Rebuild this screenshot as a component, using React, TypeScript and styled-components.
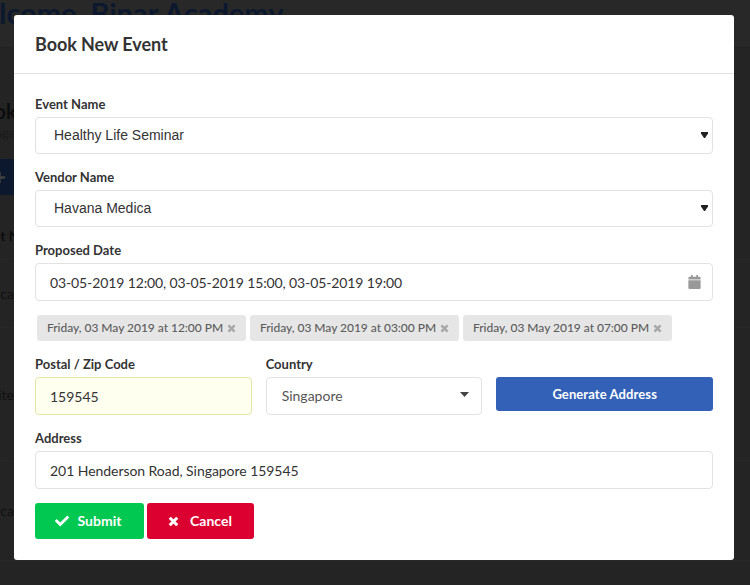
import React from "react";
import styled, { createGlobalStyle } from "styled-components";
import { FaCalendar, FaCheck, FaPlus } from "react-icons/fa";

const GlobalStyle = createGlobalStyle`
  html, body {
    margin: 0;
    height: 100%;
    overflow: hidden;
    background: #909090;
    font-family: "Lato", "Liberation Sans", sans-serif;
  }
  * { box-sizing: border-box; }
`;

/* page behind the modal, it is scrolled a bit so it gets cut off */
const Page = styled.div`
  width: 780px;
  height: 603px;
  margin: -18px 0 0 -30px;
  overflow: hidden;
  background: #909090;
  color: #333;
`;

const TopBar = styled.div`
  height: 66px;
  padding-top: 13px;
  background: #9e9e9e;
  border-bottom: 1px solid #888;
`;

const Welcome = styled.h1`
  margin: 0 0 0 -15px;
  font-size: 29px;
  line-height: 36px;
  font-weight: 700;
  white-space: nowrap;
  color: #3361b8;
`;

const PageHead = styled.h2`
  margin: 51px 0 0;
  font-size: 20px;
  line-height: 24px;
  font-weight: 700;
`;

const PageSub = styled.div`
  margin-top: 2px;
  font-size: 13px;
  line-height: 16px;
  color: #666;
`;

const AddButton = styled.div`
  display: flex;
  align-items: center;
  justify-content: flex-end;
  width: 44px;
  height: 36px;
  margin-top: 18px;
  padding-right: 8px;
  background: #3361b8;
  color: #fff;
  font-size: 13px;
`;

const TableHead = styled.div`
  height: 65px;
  padding-top: 32px;
  font-size: 14px;
  line-height: 18px;
  font-weight: 700;
  border-bottom: 1px solid #9c9c9c;
`;

const Row = styled.div<{ $h: number }>`
  display: flex;
  align-items: center;
  justify-content: space-between;
  height: ${(p) => p.$h}px;
  padding-right: 42px;
  font-size: 14px;
  border-bottom: 1px solid #9c9c9c;
`;

const RowLabel = styled.span`
  display: flex;
  justify-content: flex-end;
  width: 44px;
  white-space: nowrap;
  color: #444;
`;

const RowButton = styled.div`
  width: 60px;
  height: 39px;
  border: 1px solid #00c851;
  border-radius: 3px;
`;

const Overlay = styled.div`
  position: fixed;
  inset: 0;
  padding: 15px 0 0 14px;
  background: rgba(0, 0, 0, 0.75);
`;

const Modal = styled.div`
  width: 720px;
  background: #fff;
  border-radius: 3px;
  color: #333;
`;

const ModalHeader = styled.div`
  display: flex;
  align-items: center;
  height: 59px;
  padding: 0 21px;
  border-bottom: 1px solid #e2e2e2;
`;

const ModalTitle = styled.h3`
  margin: 0;
  font-size: 18px;
  font-weight: 700;
  letter-spacing: -0.07px;
`;

const Form = styled.form`
  display: flex;
  flex-direction: column;
  padding: 23px 21px 21px;
`;

const Field = styled.div`
  display: flex;
  flex-direction: column;
  margin-bottom: 16px;
`;

const Label = styled.label`
  margin-bottom: 6px;
  font-size: 13px;
  line-height: 14px;
  font-weight: 700;
  color: #333;
`;

const SelectWrap = styled.div`
  position: relative;
  display: flex;
`;

const NativeSelect = styled.select<{ $h?: number }>`
  appearance: none;
  width: 100%;
  height: ${(p) => p.$h ?? 37}px;
  padding: 0 18px 1px;
  background: #fff;
  border: 1px solid #e2e2e2;
  border-radius: 4px;
  font-family: "Liberation Sans", Arial, sans-serif;
  font-size: 14px;
  color: #333;
`;

const CountrySelect = styled(NativeSelect)`
  padding: 0 15px 1px;
  font-family: "Lato", sans-serif;
  color: #555;
`;

const Arrow = styled.svg<{ $right: number }>`
  position: absolute;
  top: 50%;
  right: ${(p) => p.$right}px;
  margin-top: -4px;
  pointer-events: none;
`;

const Input = styled.input<{ $highlight?: boolean; $spacing?: number }>`
  width: 100%;
  height: 38px;
  padding: 0 14px;
  background: ${(p) => (p.$highlight ? "#fffff0" : "#fff")};
  border: 1px solid ${(p) => (p.$highlight ? "#e3e8a6" : "#e2e2e2")};
  border-radius: 4px;
  font-family: "Lato", sans-serif;
  font-size: 14px;
  letter-spacing: ${(p) => p.$spacing ?? 0}px;
  color: #333;
`;

const CalendarIcon = styled(FaCalendar)`
  position: absolute;
  top: 12px;
  right: 12px;
  width: 13px;
  height: 14px;
  color: #999;
`;

const Chips = styled.div`
  display: flex;
  gap: 4px;
  margin: -2px 0 16px 2px;
`;

const Chip = styled.span`
  display: flex;
  align-items: center;
  justify-content: space-between;
  width: 209px;
  height: 26px;
  padding: 0 10px 1px;
  background: #e6e6e6;
  border-radius: 3px;
  font-size: 12px;
  font-weight: 500;
  letter-spacing: -0.03px;
  color: #5c5c5c;
`;

const ChipCross = styled.svg`
  width: 9px;
  height: 9px;
  margin-top: 1px;
  color: #a8a8a8;
`;

const ThreeCols = styled.div`
  display: grid;
  grid-template-columns: repeat(3, 1fr);
  gap: 14px;
  margin-bottom: 16px;
`;

const Column = styled.div`
  display: flex;
  flex-direction: column;
`;

const GenerateButton = styled.button`
  height: 34px;
  margin-top: 20px;
  background: #3361b8;
  border: 0;
  border-radius: 3px;
  font-family: "Lato", sans-serif;
  font-size: 13px;
  font-weight: 700;
  letter-spacing: 0.1px;
  color: #fff;
`;

const Actions = styled.div`
  display: flex;
  gap: 3px;
  margin-top: -2px;
`;

const ActionButton = styled.button<{ $color: string; $w: number; $gap: number; $shift: number }>`
  display: flex;
  align-items: center;
  justify-content: center;
  gap: ${(p) => p.$gap}px;
  width: ${(p) => p.$w}px;
  height: 36px;
  padding: 0 ${(p) => p.$shift}px 2px 0;
  background: ${(p) => p.$color};
  border: 0;
  border-radius: 3px;
  font-family: "Lato", sans-serif;
  font-size: 14px;
  font-weight: 700;
  color: #fff;
`;

const CheckIcon = styled(FaCheck)`
  width: 16px;
  height: 14px;
  margin-top: 2px;
`;

const CancelCross = styled.svg`
  width: 11px;
  height: 11px;
  margin-top: 2px;
`;

const chips = [
  "Friday, 03 May 2019 at 12:00 PM",
  "Friday, 03 May 2019 at 03:00 PM",
  "Friday, 03 May 2019 at 07:00 PM",
];

// heavy square ended x, the icon package one comes out too thin at this size
const crossPath = "M1.6 1.6L8.4 8.4M8.4 1.6L1.6 8.4";

function SelectField({ label, value }: { label: string; value: string }) {
  return (
    <Field>
      <Label>{label}</Label>
      <SelectWrap>
        <NativeSelect defaultValue={value}>
          <option>{value}</option>
        </NativeSelect>
        <Arrow $right={5} width="7" height="6" viewBox="0 0 7 6">
          <path d="M0 0h7v1.5L4 6H3L0 1.5z" fill="#222" />
        </Arrow>
      </SelectWrap>
    </Field>
  );
}

export default function App() {
  return (
    <>
      <GlobalStyle />
      <Page>
        <TopBar>
          <Welcome>Welcome, Binar Academy</Welcome>
        </TopBar>
        <PageHead>Book Event</PageHead>
        <PageSub>Manage</PageSub>
        <AddButton>
          <FaPlus />
        </AddButton>
        <TableHead>Event Name</TableHead>
        <Row $h={68}>
          <RowLabel>Havana Medica</RowLabel>
          <RowButton />
        </Row>
        <Row $h={133}>
          <RowLabel>Elite Suite</RowLabel>
        </Row>
        <Row $h={100}>
          <RowLabel>Havana Medica</RowLabel>
        </Row>
      </Page>
      <Overlay>
        <Modal>
          <ModalHeader>
            <ModalTitle>Book New Event</ModalTitle>
          </ModalHeader>
          <Form onSubmit={(e) => e.preventDefault()}>
            <SelectField label="Event Name" value="Healthy Life Seminar" />
            <SelectField label="Vendor Name" value="Havana Medica" />
            <Field>
              <Label>Proposed Date</Label>
              <SelectWrap>
                <Input
                  readOnly
                  $spacing={-0.12}
                  value="03-05-2019 12:00, 03-05-2019 15:00, 03-05-2019 19:00"
                />
                <CalendarIcon />
              </SelectWrap>
            </Field>
            <Chips>
              {chips.map((chip) => (
                <Chip key={chip}>
                  {chip}
                  <ChipCross viewBox="0 0 10 10">
                    <path d={crossPath} stroke="currentColor" strokeWidth="2.8" fill="none" />
                  </ChipCross>
                </Chip>
              ))}
            </Chips>
            <ThreeCols>
              <Column>
                <Label>Postal / Zip Code</Label>
                <Input $highlight readOnly value="159545" />
              </Column>
              <Column>
                <Label>Country</Label>
                <SelectWrap>
                  <CountrySelect $h={38} defaultValue="Singapore">
                    <option>Singapore</option>
                  </CountrySelect>
                  <Arrow $right={13} width="9" height="5" viewBox="0 0 9 5">
                    <path d="M0 0h9L4.5 5z" fill="#444" />
                  </Arrow>
                </SelectWrap>
              </Column>
              <GenerateButton type="button">Generate Address</GenerateButton>
            </ThreeCols>
            <Field>
              <Label>Address</Label>
              <Input readOnly $spacing={-0.05} value="201 Henderson Road, Singapore 159545" />
            </Field>
            <Actions>
              <ActionButton $color="#00c851" $w={109} $gap={8} $shift={4}>
                <CheckIcon />
                Submit
              </ActionButton>
              <ActionButton $color="#dc0030" $w={107} $gap={11} $shift={1}>
                <CancelCross viewBox="0 0 10 10">
                  <path d={crossPath} stroke="currentColor" strokeWidth="2.8" fill="none" />
                </CancelCross>
                Cancel
              </ActionButton>
            </Actions>
          </Form>
        </Modal>
      </Overlay>
    </>
  );
}
